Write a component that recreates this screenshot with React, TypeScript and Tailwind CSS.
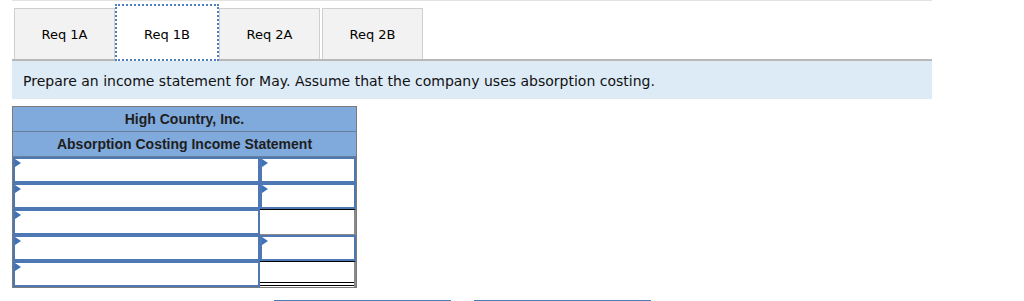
import React from 'react';

const tabs = ['Req 1A', 'Req 1B', 'Req 2A', 'Req 2B'];

// kind: 'input' shows the blue box with a marker, 'total' is a plain cell with a rule above
const rows: { right: 'input' | 'sub' | 'total' }[] = [
  { right: 'input' },
  { right: 'input' },
  { right: 'sub' },
  { right: 'input' },
  { right: 'total' },
];

function Marker() {
  return (
    <span className="absolute left-0 top-0 w-0 h-0 border-y-[4px] border-y-transparent border-l-[6px] border-l-[#3f73b8]" />
  );
}

function InputCell({ width }: { width: string }) {
  return (
    <div className={`relative ${width} h-full border-2 border-[#4d78b3] bg-white`}>
      <Marker />
    </div>
  );
}

export default function App() {
  return (
    <div className="w-[1024px] h-[301px] overflow-hidden bg-white font-['DejaVu_Sans',Verdana,sans-serif] text-[#111]">
      <div className="ml-[12px] w-[920px]">
        {/* top rule */}
        <div className="h-px bg-[#e2e2e2]" />

        {/* tab strip */}
        <div className="relative h-[60px] flex items-end pl-[2px] border-b-[2px] border-[#b8b8b8]">
          {tabs.map((t, i) => {
            const active = i === 1;
            return active ? (
              <div
                key={t}
                className="relative -mb-[2px] z-10 w-[104px] h-[57px] flex items-center justify-center pt-[4px] bg-white border-2 border-dotted border-[#4f7fc0] text-[13px] text-black"
              >
                {t}
              </div>
            ) : (
              <div
                key={t}
                className={`w-[101px] h-[51px] flex items-center justify-center pt-[2px] bg-[#f2f2f2] border border-b-0 border-[#cfcfcf] text-[13px] text-black ${
                  i === 3 ? 'ml-[2px]' : ''
                }`}
              >
                {t}
              </div>
            );
          })}
        </div>

        {/* instructions */}
        <div className="h-[38px] bg-[#ddebf7] flex items-center pl-[11px] pt-[3px] text-[14px] text-[#111]">
          Prepare an income statement for May. Assume that the company uses absorption costing.
        </div>

        {/* statement */}
        <div className="mt-[7px] w-[345px] border border-[#7a7a7a] font-['Liberation_Sans',Arial,sans-serif]">
          <div className="h-[25px] bg-[#80a9dc] border-b border-[#6a7f9c] flex items-center justify-center text-[14px] font-bold text-[#1e1e1e]">
            High Country, Inc.
          </div>
          <div className="h-[25px] bg-[#80a9dc] border-b border-[#6a7f9c] flex items-center justify-center text-[14px] font-bold text-[#1e1e1e]">
            Absorption Costing Income Statement
          </div>
          {rows.map((r, i) => (
            <div key={i} className="flex h-[26px]">
              <InputCell width="w-[247px]" />
              {r.right === 'input' ? (
                <InputCell width="flex-1" />
              ) : r.right === 'sub' ? (
                <div className="flex-1 h-full border-t border-black border-r-2 border-r-[#8a8a8a] border-b border-b-[#8a8a8a] bg-white" />
              ) : (
                <div className="flex-1 h-full flex flex-col justify-between border-t border-black border-r-2 border-r-[#8a8a8a] bg-white">
                  <div />
                  <div className="border-y border-black h-[4px] mb-[1px]" />
                </div>
              )}
            </div>
          ))}
        </div>

        {/* action buttons, cut off at the bottom */}
        <div className="mt-[12px] flex gap-[23px] pl-[262px]">
          <div className="w-[177px] h-[30px] border-t border-[#4a7ebb] bg-white" />
          <div className="w-[177px] h-[30px] border-t border-[#4a7ebb] bg-white" />
        </div>
      </div>
    </div>
  );
}
